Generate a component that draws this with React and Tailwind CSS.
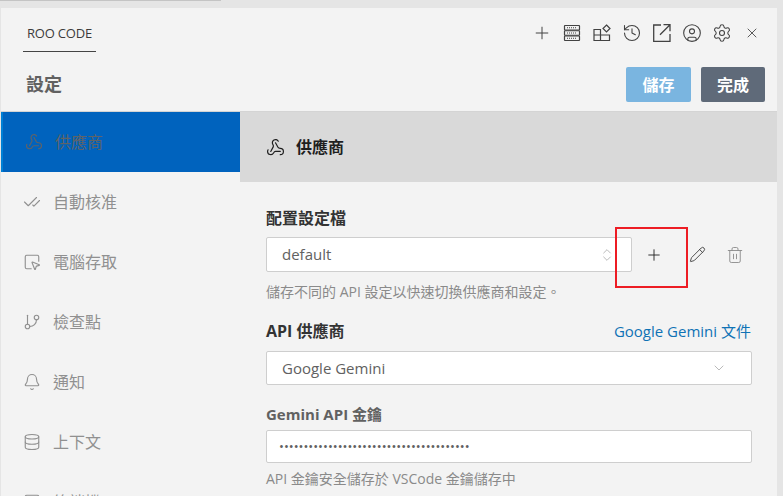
import React from 'react';
import { Plus, Webhook, CheckCheck, SquareMousePointer, GitBranch, Bell, Database, ChevronDown, ChevronsUpDown, Pencil, Trash2, History, CircleUser, Settings, X, SquareTerminal } from 'lucide-react';

const FONT = 'font-["Open_Sans","Noto_Sans_CJK_TC",sans-serif]';

const ServerIcon = () => (
  <svg width="18" height="18" viewBox="0 0 18 18" fill="none" stroke="currentColor" strokeWidth="1.2">
    <rect x="1.5" y="1.5" width="15" height="4.5" rx="0.5" />
    <rect x="1.5" y="6.75" width="15" height="4.5" rx="0.5" />
    <rect x="1.5" y="12" width="15" height="4.5" rx="0.5" />
    <path d="M4 3.75h10M4 9h10M4 14.25h10" strokeDasharray="1 1" />
  </svg>
);

const ExtensionsIcon = () => (
  <svg width="18" height="18" viewBox="0 0 18 18" fill="none" stroke="currentColor" strokeWidth="1.2">
    <path d="M1 5.5h6.5v11H1zM1 11h15.5v5.5H7.5V8.500" />
    <path d="M13.5 1l3.500 3.500-3.500 3.500-3.500-3.500z" />
  </svg>
);

const ExternalIcon = () => (
  <svg width="18" height="18" viewBox="0 0 18 18" fill="none" stroke="currentColor" strokeWidth="1.300">
    <path d="M8 1H.7v16.300H17V10" />
    <path d="M10.500.7h6.500v6.500M17 .7L7 10.700" />
  </svg>
);

const topIcons = [
  <Plus size={20} strokeWidth={1.2} />,
  <ServerIcon />,
  <ExtensionsIcon />,
  <History size={20} strokeWidth={1.3} />,
  <ExternalIcon />,
  <CircleUser size={20} strokeWidth={1.3} />,
  <Settings size={20} strokeWidth={1.3} />,
  <X size={16} strokeWidth={1.3} />,
];

const navItems = [
  { label: '供應商', icon: Webhook, active: true },
  { label: '自動核准', icon: CheckCheck },
  { label: '電腦存取', icon: SquareMousePointer },
  { label: '檢查點', icon: GitBranch },
  { label: '通知', icon: Bell },
  { label: '上下文', icon: Database },
  { label: '終端機', icon: SquareTerminal },
];

const NavItem = ({ item }) => {
  const Icon = item.icon;
  return (
    <div className={`h-[60px] shrink-0 flex items-center gap-[12px] pl-[22px] text-[16px] ${item.active ? 'bg-[#0063be] border-l-2 border-[#007fd4] text-[#5f6368] pl-[20px]' : 'text-[#909090]'}`}>
      <Icon size={18} strokeWidth={1.5} />
      <span>{item.label}</span>
    </div>
  );
};

export default function App() {
  return (
    <div className={`${FONT} relative w-[783px] h-[496px] overflow-hidden bg-[#f3f3f3] flex flex-col`}>
      {/* vscode tab strip */}
      <div className="h-[8px] shrink-0 bg-[#e5e5e5]">
        <div className="h-[1px] w-[221px] bg-[#c4c4c4]" />
      </div>

      <div className="flex-1 min-h-0 flex border-l border-[#e5e5e5]">
        <div className="flex-1 min-w-0 flex flex-col">
          <div className="h-[50px] shrink-0 flex items-center justify-between pl-[22px] pr-[15px]">
            <div className="w-[73px] h-[36px] mt-[2px] flex items-center justify-center border-b border-[#444444] text-[13px] text-[#3b3b3b] tracking-[-0.2px]">ROO CODE</div>
            <div className="flex items-center gap-[10px] text-[#424242]">
              {topIcons.map((icon, i) => (
                <div key={i} className="w-[20px] h-[20px] flex items-center justify-center">{icon}</div>
              ))}
            </div>
          </div>

          <div className="h-[54px] shrink-0 flex items-center justify-between pl-[25px] pr-[12px] border-b border-[#d4d4d4]">
            <div className="text-[18px] font-bold text-[#616161]">設定</div>
            <div className="flex items-center gap-[10px]">
              <div className="w-[65px] h-[35px] rounded-[2px] bg-[#7ab5e0] text-white font-bold text-[16px] flex items-center justify-center">儲存</div>
              <div className="w-[64px] h-[35px] rounded-[2px] bg-[#5f6a79] text-white font-bold text-[16px] flex items-center justify-center">完成</div>
            </div>
          </div>

          <div className="flex-1 min-h-0 flex overflow-hidden">
            <div className="w-[239px] shrink-0 flex flex-col">
              {navItems.map((item) => <NavItem key={item.label} item={item} />)}
            </div>

            <div className="flex-1 min-w-0">
              <div className="h-[70px] bg-[#d9d9d9] flex items-center gap-[11px] pl-[26px] text-[16px] font-bold text-[#1f1f1f]">
                <Webhook size={19} strokeWidth={1.5} />
                <span>供應商</span>
              </div>

              <div className="pl-[26px] pr-[25px] pt-[24px]">
                <div className="text-[16px] leading-[24px] font-bold text-[#333333]">配置設定檔</div>
                <div className="mt-[7px] flex items-center">
                  <div className="w-[366px] h-[35px] bg-white border border-[#cecece] rounded-[2px] pl-[15px] pr-[16px] flex items-center justify-between text-[15px] text-[#616161]">
                    <span>default</span>
                    <ChevronsUpDown size={16} strokeWidth={1.2} className="text-[#a8a8a8]" />
                  </div>
                  <div className="ml-[13px] w-[18px] h-[18px] flex items-center justify-center text-[#1f1f1f]"><Plus size={20} strokeWidth={1.2} /></div>
                  <div className="ml-[25px] w-[18px] h-[18px] flex items-center justify-center text-[#333333]"><Pencil size={17} strokeWidth={1.2} /></div>
                  <div className="ml-[20px] w-[18px] h-[18px] flex items-center justify-center text-[#8a8a8a]"><Trash2 size={18} strokeWidth={1.2} /></div>
                </div>
                <div className="mt-[10px] text-[14px] leading-[20px] text-[#8a8a8a]">儲存不同的 API 設定以快速切換供應商和設定。</div>

                <div className="mt-[17px] flex items-center justify-between pr-[1px]">
                  <span className="text-[16px] leading-[24px] font-bold text-[#333333]">API 供應商</span>
                  <span className="text-[15px] text-[#0f72b5]">Google Gemini 文件</span>
                </div>
                <div className="mt-[8px] w-[486px] h-[34px] bg-white border border-[#cecece] rounded-[2px] pl-[15px] pr-[24px] flex items-center justify-between text-[15px] text-[#616161]">
                  <span>Google Gemini</span>
                  <ChevronDown size={16} strokeWidth={1.2} className="text-[#a8a8a8]" />
                </div>

                <div className="mt-[17px] text-[15px] leading-[24px] font-bold text-[#616161]">Gemini API 金鑰</div>
                <div className="mt-[4px] w-[486px] h-[33px] bg-white border border-[#cecece] rounded-[2px] pl-[12px] flex items-center text-[13px] text-[#616161]">
                  <span>{'•'.repeat(39)}</span>
                </div>
                <div className="mt-[6px] text-[14px] leading-[20px] text-[#8a8a8a]">API 金鑰安全儲存於 VSCode 金鑰儲存中</div>
              </div>
            </div>
          </div>
        </div>

        {/* scrollbar gutter */}
        <div className="w-[6px] shrink-0 bg-[#e5e5e5]" />
      </div>

      {/* red annotation */}
      <div className="absolute left-[615px] top-[227px] w-[73px] h-[61px] border-2 border-[#ed1c24]" />
    </div>
  );
}
